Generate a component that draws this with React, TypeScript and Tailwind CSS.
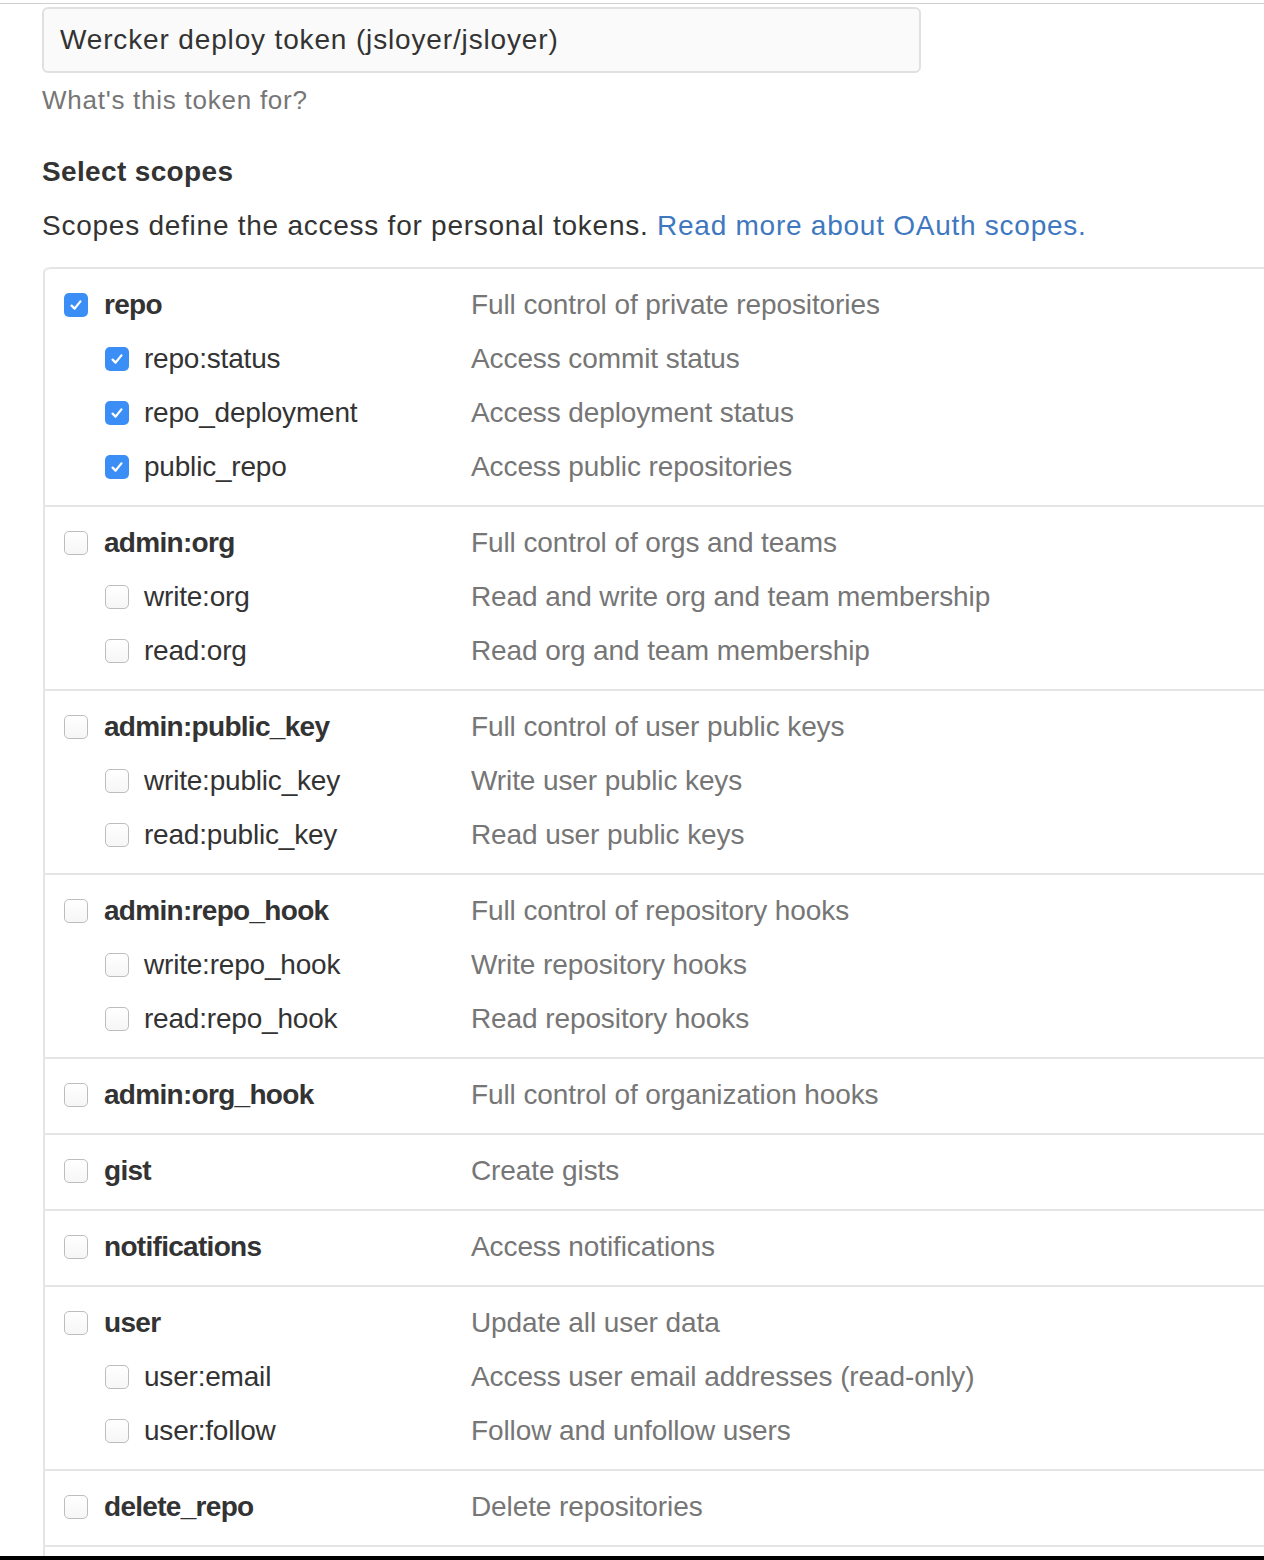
import React from "react";

type Item = { name: string; desc: string; checked?: boolean };
type Group = { main: Item; subs: Item[] };

const groups: Group[] = [
  {
    main: { name: "repo", desc: "Full control of private repositories", checked: true },
    subs: [
      { name: "repo:status", desc: "Access commit status", checked: true },
      { name: "repo_deployment", desc: "Access deployment status", checked: true },
      { name: "public_repo", desc: "Access public repositories", checked: true },
    ],
  },
  {
    main: { name: "admin:org", desc: "Full control of orgs and teams" },
    subs: [
      { name: "write:org", desc: "Read and write org and team membership" },
      { name: "read:org", desc: "Read org and team membership" },
    ],
  },
  {
    main: { name: "admin:public_key", desc: "Full control of user public keys" },
    subs: [
      { name: "write:public_key", desc: "Write user public keys" },
      { name: "read:public_key", desc: "Read user public keys" },
    ],
  },
  {
    main: { name: "admin:repo_hook", desc: "Full control of repository hooks" },
    subs: [
      { name: "write:repo_hook", desc: "Write repository hooks" },
      { name: "read:repo_hook", desc: "Read repository hooks" },
    ],
  },
  { main: { name: "admin:org_hook", desc: "Full control of organization hooks" }, subs: [] },
  { main: { name: "gist", desc: "Create gists" }, subs: [] },
  { main: { name: "notifications", desc: "Access notifications" }, subs: [] },
  {
    main: { name: "user", desc: "Update all user data" },
    subs: [
      { name: "user:email", desc: "Access user email addresses (read-only)" },
      { name: "user:follow", desc: "Follow and unfollow users" },
    ],
  },
  { main: { name: "delete_repo", desc: "Delete repositories" }, subs: [] },
];

function Box({ checked }: { checked?: boolean }) {
  if (checked) {
    return (
      <span className="flex h-[24px] w-[24px] shrink-0 items-center justify-center rounded-[5px] bg-[#3b8ef5]">
        <svg width="16" height="16" viewBox="0 0 16 16" fill="none">
          <path d="M3.6 8.6 L6.6 11.6 L12.4 4.4" stroke="white" strokeWidth="2.3" strokeLinecap="round" strokeLinejoin="round" />
        </svg>
      </span>
    );
  }
  return (
    <span className="block h-[24px] w-[24px] shrink-0 rounded-[5px] border-[1.5px] border-[#bdbdbd] bg-gradient-to-b from-white to-[#f6f6f6]" />
  );
}

function Row({ item, sub }: { item: Item; sub?: boolean }) {
  return (
    <div className="flex h-[54px] items-center">
      <div className={`flex w-[407px] shrink-0 items-center ${sub ? "pl-[41px]" : ""}`}>
        <Box checked={item.checked} />
        <span
          className={`${
            sub ? "ml-[15px] font-normal tracking-[-0.2px]" : "ml-[16px] font-bold tracking-[-0.7px]"
          } text-[28px] leading-[40px] text-[#333]`}
        >
          {item.name}
        </span>
      </div>
      <span className="whitespace-nowrap text-[28px] leading-[40px] tracking-[-0.1px] text-[#767676]">
        {item.desc}
      </span>
    </div>
  );
}

export default function App() {
  return (
    <div
      className="flex h-[1560px] w-[1264px] flex-col overflow-hidden bg-white"
      style={{ fontFamily: '"Liberation Sans", Arial, sans-serif' }}
    >
      <div className="flex-1 overflow-hidden">
        <div className="mt-[3px] h-[1px] w-full bg-[#cfcfcf]" />
        <div className="pl-[42px]">
          <div className="mt-[3px] flex h-[66px] w-[879px] items-center rounded-[6px] border-2 border-[#e0e0e0] bg-[#fafafa] pl-[16px] text-[28px] tracking-[0.85px] text-[#333]">
            Wercker deploy token (jsloyer/jsloyer)
          </div>
          <div className="mt-[7px] text-[26px] leading-[40px] tracking-[0.75px] text-[#767676]">
            What's this token for?
          </div>
          <div className="mt-[32px] text-[28px] font-bold leading-[40px] tracking-[0.35px] text-[#333]">
            Select scopes
          </div>
          <div className="mt-[14px] whitespace-nowrap text-[28px] leading-[40px] tracking-[0.75px] text-[#333]">
            Scopes define the access for personal tokens.{" "}
            <span className="text-[#4078c0]">Read more about OAuth scopes.</span>
          </div>
        </div>
        <div className="ml-[43px] mt-[21px] rounded-tl-[6px] border-l-2 border-[#e5e5e5]">
          {groups.map((g, i) => (
            <div
              key={g.main.name}
              className={`border-t-2 border-[#e5e5e5] pb-[11px] pl-[19px] pt-[9px] ${i === 0 ? "rounded-tl-[6px]" : ""}`}
            >
              <Row item={g.main} />
              {g.subs.map((s) => (
                <Row key={s.name} item={s} sub />
              ))}
            </div>
          ))}
          <div className="h-[76px] border-t-2 border-[#e5e5e5]" />
        </div>
      </div>
      <div className="h-[4px] w-full shrink-0 bg-black" />
    </div>
  );
}
